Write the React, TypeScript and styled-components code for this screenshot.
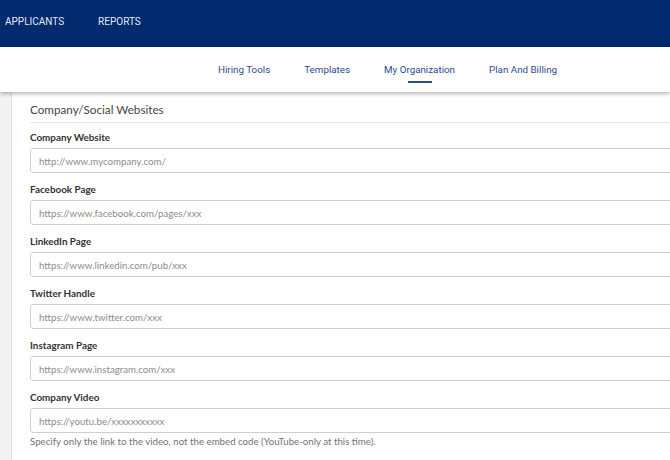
import React from 'react';
import styled, { createGlobalStyle } from 'styled-components';

const GlobalStyle = createGlobalStyle`
  html, body {
    margin: 0;
    padding: 0;
    background: #ffffff;
    overflow: hidden;
  }
  * {
    box-sizing: border-box;
  }
`;

interface SocialField {
  label: string;
  placeholder: string;
  help?: string;
}

const mainLinks = ['APPLICANTS', 'REPORTS'];
const settingsTabs = ['Hiring Tools', 'Templates', 'My Organization', 'Plan And Billing'];

const fields: SocialField[] = [
  { label: 'Company Website', placeholder: 'http://www.mycompany.com/' },
  { label: 'Facebook Page', placeholder: 'https://www.facebook.com/pages/xxx' },
  { label: 'LinkedIn Page', placeholder: 'https://www.linkedin.com/pub/xxx' },
  { label: 'Twitter Handle', placeholder: 'https://www.twitter.com/xxx' },
  { label: 'Instagram Page', placeholder: 'https://www.instagram.com/xxx' },
  {
    label: 'Company Video',
    placeholder: 'https://youtu.be/xxxxxxxxxxx',
    help: 'Specify only the link to the video, not the embed code (YouTube-only at this time).',
  },
];

const App: React.FC = () => {
  return (
    <Page>
      <GlobalStyle />
      <TopBar>
        {mainLinks.map((link) => (
          <TopLink key={link}>{link}</TopLink>
        ))}
      </TopBar>
      <SubNav>
        {settingsTabs.map((tab) => (
          <Tab key={tab} $active={tab === 'My Organization'}>
            {tab}
          </Tab>
        ))}
      </SubNav>
      <Body>
        <Gutter />
        <Panel>
          <SectionTitle>Company/Social Websites</SectionTitle>
          {fields.map((field) => (
            <Field key={field.label}>
              <Label>{field.label}</Label>
              <Input placeholder={field.placeholder} />
              {field.help && <Help>{field.help}</Help>}
            </Field>
          ))}
        </Panel>
      </Body>
    </Page>
  );
};

const Page = styled.div`
  width: 670px;
  height: 460px;
  overflow: hidden;
  display: flex;
  flex-direction: column;
`;

const TopBar = styled.div`
  height: 47px;
  flex-shrink: 0;
  display: flex;
  align-items: center;
  gap: 34px;
  padding: 0 0 5px 5px;
  background: #012a6f;
`;

const TopLink = styled.span`
  font-family: Roboto, 'Liberation Sans', sans-serif;
  font-size: 10px;
  color: rgba(255, 255, 255, 0.92);
`;

const SubNav = styled.div`
  position: relative;
  z-index: 2;
  height: 45px;
  flex-shrink: 0;
  display: flex;
  align-items: stretch;
  padding-left: 201px;
  background: #ffffff;
  box-shadow: 0 2px 4px rgba(0, 0, 0, 0.28);
`;

const Tab = styled.div<{ $active?: boolean }>`
  position: relative;
  display: flex;
  align-items: center;
  padding: 0 17px 1px;
  font-family: Roboto, 'Liberation Sans', sans-serif;
  font-size: 9.8px;
  color: #2b4c8c;

  &::after {
    content: '';
    display: ${(p) => (p.$active ? 'block' : 'none')};
    position: absolute;
    left: 50%;
    bottom: 9px;
    width: 24px;
    height: 2px;
    margin-left: -12px;
    background: #2b4c8c;
  }
`;

const Body = styled.div`
  flex: 1;
  display: flex;
  min-height: 0;
`;

const Gutter = styled.div`
  width: 12px;
  flex-shrink: 0;
  background: #f3f3f3;
  border-right: 1px solid #e2e2e2;
`;

const Panel = styled.div`
  width: 760px;
  flex-shrink: 0;
  padding: 7px 0 0 18px;
  background: #ffffff;
  font-family: Lato, 'Liberation Sans', sans-serif;
`;

const SectionTitle = styled.div`
  font-size: 11.7px;
  line-height: 20px;
  color: #454545;
  padding-bottom: 3px;
  border-bottom: 1px solid #e6e6e6;
  margin-bottom: 6px;
`;

const Field = styled.div`
  display: flex;
  flex-direction: column;
  margin-bottom: 8px;
`;

const Label = styled.label`
  font-size: 9.9px;
  font-weight: 700;
  line-height: 16px;
  color: #333333;
  margin-bottom: 3px;
`;

const Input = styled.input`
  height: 25px;
  width: 100%;
  padding: 0 8px;
  border: 1px solid #cfcfcf;
  border-radius: 3px;
  font-family: Lato, 'Liberation Sans', sans-serif;
  font-size: 9.7px;
  color: #444;
  outline: none;

  &::placeholder {
    color: #8c8c8c;
  }
`;

const Help = styled.div`
  font-size: 9.7px;
  line-height: 16px;
  color: #737373;
`;

export default App;
